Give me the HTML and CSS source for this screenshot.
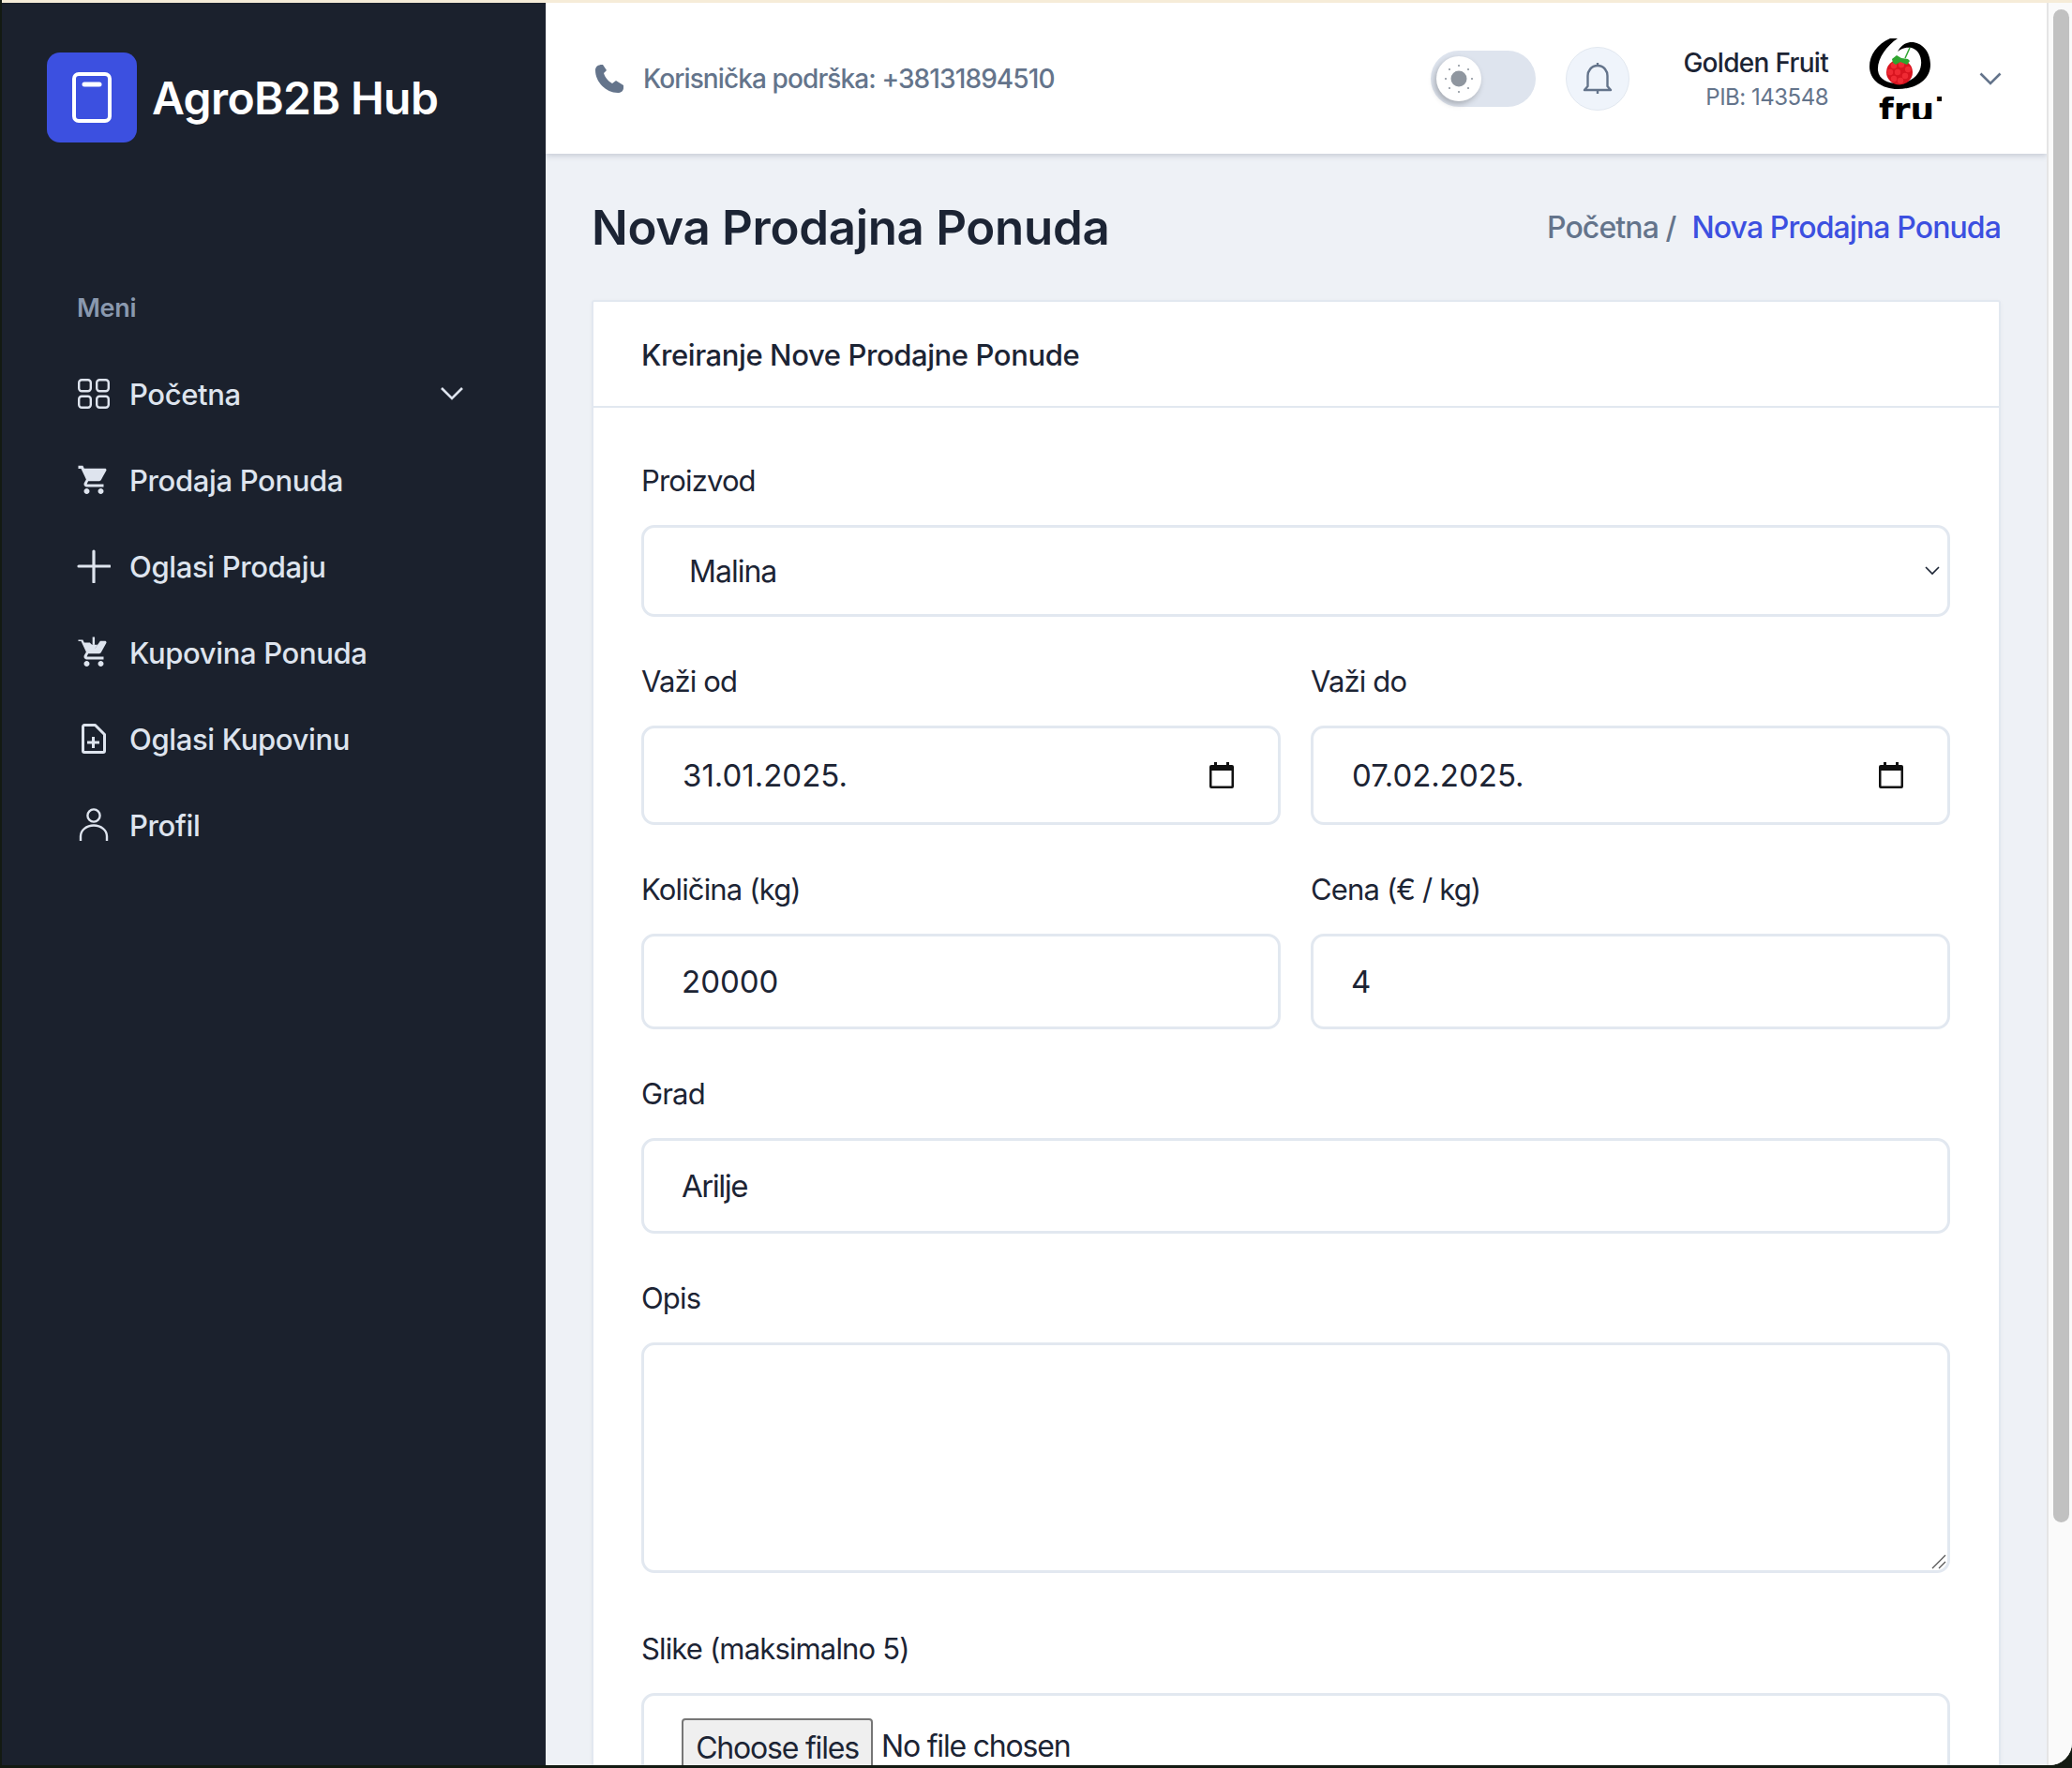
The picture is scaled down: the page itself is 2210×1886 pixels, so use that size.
FILE: index.html
```html
<!DOCTYPE html>
<html lang="sr">
<head>
<meta charset="utf-8">
<title>Nova Prodajna Ponuda</title>
<link rel="stylesheet" href="styles.css">
</head>
<body>
<div class="window">
  <aside class="sidebar">
    <div class="brand">
      <span class="brand-mark">
        <svg width="42" height="54" viewBox="0 0 42 54" fill="none" stroke="#fff" stroke-width="4"><rect x="2" y="2" width="38" height="50" rx="5"/><path d="M13 13h16" stroke-width="5" stroke-linecap="round"/></svg>
      </span>
      <span class="brand-name">AgroB2B Hub</span>
    </div>
    <div class="menu-title">Meni</div>
    <nav class="nav">
      <a class="nav-item">
        <span class="nav-icon"><svg width="34" height="32" viewBox="0 0 34 32" fill="none" stroke="currentColor" stroke-width="2.4"><rect x="1.2" y="1.2" width="12.6" height="12" rx="3"/><rect x="20.2" y="1.2" width="12.6" height="12" rx="3"/><rect x="1.2" y="18.8" width="12.6" height="12" rx="3"/><rect x="20.2" y="18.8" width="12.6" height="12" rx="3"/></svg></span>
        <span class="nav-label">Početna</span>
        <svg class="nav-chevron" width="26" height="16" viewBox="0 0 26 16" fill="none" stroke="currentColor" stroke-width="2.6"><path d="M2 2l11 11L24 2"/></svg>
      </a>
      <a class="nav-item">
        <span class="nav-icon"><svg width="36" height="36" viewBox="0 0 24 24" fill="currentColor"><path d="M7 18c-1.1 0-1.99.9-1.99 2S5.9 22 7 22s2-.9 2-2-.9-2-2-2zM1 2v2h2l3.6 7.59-1.35 2.45c-.16.28-.25.61-.25.96 0 1.1.9 2 2 2h12v-2H7.42c-.14 0-.25-.11-.25-.25l.03-.12.9-1.83h7.45c.75 0 1.41-.41 1.75-1.03l3.58-6.49c.08-.14.12-.31.12-.48 0-.55-.45-1-1-1H5.21l-.94-2H1zm16 16c-1.1 0-1.99.9-1.99 2s.89 2 1.99 2 2-.9 2-2-.9-2-2-2z"/></svg></span>
        <span class="nav-label">Prodaja Ponuda</span>
      </a>
      <a class="nav-item">
        <span class="nav-icon"><svg width="36" height="36" viewBox="0 0 36 36" fill="none" stroke="currentColor" stroke-width="3.2" stroke-linecap="round"><path d="M18 2v33M2 18h33"/></svg></span>
        <span class="nav-label">Oglasi Prodaju</span>
      </a>
      <a class="nav-item">
        <span class="nav-icon"><svg width="36" height="36" viewBox="0 0 24 24" fill="currentColor"><path d="M7 18c-1.1 0-1.99.9-1.99 2S5.9 22 7 22s2-.9 2-2-.9-2-2-2zM1 2v2h2l3.6 7.59-1.35 2.45c-.16.28-.25.61-.25.96 0 1.1.9 2 2 2h12v-2H7.42c-.14 0-.25-.11-.25-.25l.03-.12.9-1.83h7.45c.75 0 1.41-.41 1.75-1.03l3.58-6.49c.08-.14.12-.31.12-.48 0-.55-.45-1-1-1h-3.4L13 9 9.2 5H5.21l-.94-2H1zm16 16c-1.1 0-1.99.9-1.99 2s.89 2 1.99 2 2-.9 2-2-.9-2-2-2z"/><path d="M11.9 1v5.6" stroke="currentColor" stroke-width="1.6" fill="none"/><path d="M11.9 10.5L9 6.5h5.8z"/></svg></span>
        <span class="nav-label">Kupovina Ponuda</span>
      </a>
      <a class="nav-item">
        <span class="nav-icon"><svg width="26" height="32" viewBox="0 0 26 32" fill="none" stroke="currentColor" stroke-width="3" stroke-linejoin="round"><path d="M3 1.500h11.500L24.500 11.500V29a1.500 1.500 0 0 1-1.500 1.500H3A1.500 1.500 0 0 1 1.500 29V3A1.500 1.500 0 0 1 3 1.500z"/><path d="M6 20h13M12.500 14v12"/></svg></span>
        <span class="nav-label">Oglasi Kupovinu</span>
      </a>
      <a class="nav-item">
        <span class="nav-icon"><svg width="32" height="36" viewBox="0 0 32 36" fill="none" stroke="currentColor" stroke-width="2.4"><circle cx="16" cy="8" r="6.6"/><path d="M2 35V30a14 11.500 0 0 1 28 0v5"/></svg></span>
        <span class="nav-label">Profil</span>
      </a>
    </nav>
  </aside>

  <div class="content">
    <header class="topbar">
      <div class="support">
        <svg width="32" height="32" viewBox="0 0 32 32" fill="#64748b"><path d="M8 1C4 1 1 3 1 7c0 12 11 24 24 24 3 0 6-2 6-5v-3l-8-5-4 3c-4-2-8-7-9-11l3-3-4-6z"/></svg>
        <span>Korisnička podrška: +38131894510</span>
      </div>
      <div class="top-actions">
        <div class="toggle">
          <span class="knob">
            <svg width="32" height="32" viewBox="0 0 32 32" fill="#8f969f"><circle cx="16" cy="16" r="8.500"/><circle cx="16" cy="2" r="1.100"/><circle cx="16" cy="30" r="1.100"/><circle cx="2" cy="16" r="1.100"/><circle cx="30" cy="16" r="1.100"/><circle cx="6" cy="6" r="1.100"/><circle cx="26" cy="6" r="1.100"/><circle cx="6" cy="26" r="1.100"/><circle cx="26" cy="26" r="1.100"/></svg>
          </span>
        </div>
        <div class="bell">
          <svg width="32" height="36" viewBox="0 0 32 36" fill="none" stroke="#64748b" stroke-width="2.400" stroke-linejoin="round"><path d="M16 4C9 4 5.500 10 5.500 15v11L2 30h28l-3.500-4V15C26.500 10 23 4 16 4zM16 1v3M16 30v4"/></svg>
        </div>
        <div class="user">
          <div class="user-name">Golden Fruit</div>
          <div class="user-pib">PIB: 143548</div>
        </div>
        <svg class="logo" width="77" height="86" viewBox="0 0 77 86">
          <path d="M22 0C8 6 0 18 0 30c0 15 14 24 30 24 20 0 35-10 35-26C65 13 55 4 45 4c-6 0-11 3-15 10 5-4 10-5 15-4 7 2 11 10 10 18-1 12-13 20-25 20-10 0-20-4-21-14C8 22 18 8 30 0z" fill="#000"/>
          <path d="M43 10l-5 11" stroke="#2fa52f" stroke-width="1.500" fill="none"/>
          <ellipse cx="32" cy="36" rx="14" ry="13.500" fill="#d8141f"/>
          <g fill="#ef2a33"><circle cx="26" cy="29" r="3.200"/><circle cx="34" cy="28" r="3.200"/><circle cx="41" cy="33" r="3.200"/><circle cx="22" cy="36" r="3.200"/><circle cx="30" cy="36" r="3.200"/><circle cx="38" cy="40" r="3.200"/><circle cx="26" cy="43" r="3.200"/><circle cx="33" cy="45" r="3.200"/></g>
          <path d="M24 22l5-4 5 3 7 1 2 2-3 4-7-3-5 3-3-2z" fill="#2fa52f"/>
          <text class="logo-text" x="10" y="89">fruit</text>
          <rect x="69" y="68" width="8" height="18" fill="#fff"/>
        </svg>
        <svg class="user-chevron" width="24" height="14" viewBox="0 0 24 14" fill="none" stroke="#64748b" stroke-width="2.600"><path d="M1.500 1.500L12 12 22.500 1.500"/></svg>
      </div>
    </header>

    <main class="main">
      <div class="page-head">
        <h1 class="page-title">Nova Prodajna Ponuda</h1>
        <div class="crumbs"><span>Početna /</span><span class="crumb-current">Nova Prodajna Ponuda</span></div>
      </div>
      <section class="card">
        <h2 class="card-title">Kreiranje Nove Prodajne Ponude</h2>
        <form class="form">
          <div class="field">
            <label class="label">Proizvod</label>
            <div class="control select-box">Malina
              <svg class="select-arrow" width="16" height="10" viewBox="0 0 16 10" fill="none" stroke="#1c2434" stroke-width="1.600"><path d="M1 1l7 7 7-7"/></svg>
            </div>
          </div>
          <div class="row">
            <div class="field">
              <label class="label">Važi od</label>
              <div class="control date-box">31.01.2025.
                <svg class="calendar" width="26" height="28" viewBox="0 0 26 28"><path d="M5 0h3v3h10V0h3v3h3a2 2 0 0 1 2 2v21a2 2 0 0 1-2 2H2a2 2 0 0 1-2-2V5a2 2 0 0 1 2-2h3zM2.500 9v16.500h21V9z" fill="#111"/></svg>
              </div>
            </div>
            <div class="field">
              <label class="label">Važi do</label>
              <div class="control date-box">07.02.2025.
                <svg class="calendar" width="26" height="28" viewBox="0 0 26 28"><path d="M5 0h3v3h10V0h3v3h3a2 2 0 0 1 2 2v21a2 2 0 0 1-2 2H2a2 2 0 0 1-2-2V5a2 2 0 0 1 2-2h3zM2.500 9v16.500h21V9z" fill="#111"/></svg>
              </div>
            </div>
          </div>
          <div class="row">
            <div class="field">
              <label class="label">Količina (kg)</label>
              <div class="control text-box">20000</div>
            </div>
            <div class="field">
              <label class="label">Cena (€ / kg)</label>
              <div class="control text-box">4</div>
            </div>
          </div>
          <div class="field">
            <label class="label">Grad</label>
            <div class="control text-box city-box">Arilje</div>
          </div>
          <div class="field field-opis">
            <label class="label">Opis</label>
            <div class="control area-box">
              <svg class="grip" width="16" height="16" viewBox="0 0 16 16" fill="none" stroke="#555" stroke-width="1.300"><path d="M1 15L15 1M8 15l7-7"/></svg>
            </div>
          </div>
          <div class="field">
            <label class="label">Slike (maksimalno 5)</label>
            <div class="control file-box"><button type="button" class="file-btn">Choose files</button><span>No file chosen</span></div>
          </div>
        </form>
      </section>
    </main>
  </div>

  <div class="scrollbar"><span class="thumb"></span></div>
</div>
</body>
</html>
```
FILE: styles.css
```css
* { box-sizing: border-box; }
html, body { margin: 0; height: 100%; overflow: hidden; }
body {
  background: #131a12;
  font-family: Inter, "Noto Sans", sans-serif;
  color: #1c2434;
}
.window {
  width: 2208px;
  height: 1883px;
  margin-left: 2px;
  display: flex;
  overflow: hidden;
  border-top: 3px solid #f6ecd8;
  border-bottom-right-radius: 24px;
  background: #fff;
}
.sidebar {
  width: 580px;
  flex: none;
  background: #1b212d;
  color: #dee4ee;
  padding: 53px 0 0 48px;
}
.brand { display: flex; align-items: center; gap: 16px; }
.brand-mark {
  width: 96px;
  height: 96px;
  border-radius: 14px;
  background: #3c50e0;
  display: flex;
  align-items: center;
  justify-content: center;
  color: #fff;
}
.brand-name { font-size: 48px; font-weight: 600; color: #fff; letter-spacing: -0.6px; }
.menu-title {
  margin: 157px 0 0 32px;
  font-size: 27px;
  line-height: 40px;
  font-weight: 600;
  color: #8a99af;
  letter-spacing: -0.3px;
}
.nav { margin: 25px 0 0 32px; display: flex; flex-direction: column; }
.nav-item { height: 92px; display: flex; align-items: center; position: relative; }
.nav-icon {
  width: 36px;
  height: 40px;
  margin-right: 20px;
  flex: none;
  display: flex;
  align-items: center;
  justify-content: center;
}
.nav-label { font-size: 31px; font-weight: 500; letter-spacing: -0.35px; }
.nav-chevron { margin-left: auto; margin-right: 87px; }

.content { flex: 1; min-width: 0; display: flex; flex-direction: column; overflow: hidden; background: #eef1f6; }
.topbar {
  height: 161px;
  flex: none;
  background: #fff;
  box-shadow: 0 2px 6px rgba(120, 130, 150, .35);
  position: relative;
  display: flex;
  align-items: center;
  justify-content: space-between;
  padding: 0 48px 0 52px;
}
.support { display: flex; align-items: center; gap: 20px; font-size: 28px; font-weight: 500; letter-spacing: -0.9px; color: #64748b; }
.top-actions { display: flex; align-items: center; }
.toggle { width: 112px; height: 60px; border-radius: 30px; background: #dee4ee; display: flex; align-items: center; padding-left: 6px; }
.knob {
  width: 48px;
  height: 48px;
  border-radius: 50%;
  background: #fff;
  box-shadow: -2px 3px 6px rgba(0, 0, 0, .25);
  display: flex;
  align-items: center;
  justify-content: center;
}
.bell {
  width: 68px;
  height: 68px;
  margin-left: 32px;
  border-radius: 50%;
  background: #eff4fb;
  border: 1px solid #e2e8f0;
  display: flex;
  align-items: center;
  justify-content: center;
}
.user { width: 212px; text-align: right; margin-top: 3px; }
.user-name { font-size: 28px; line-height: 38px; font-weight: 500; color: #1c2434; letter-spacing: -0.7px; }
.user-pib { font-size: 24px; line-height: 36px; color: #64748b; letter-spacing: -0.5px; }
.logo { margin-left: 44px; flex: none; overflow: hidden; }
.logo-text { font-family: "DejaVu Sans", sans-serif; font-weight: 700; font-size: 36px; }
.user-chevron { margin-left: 40px; flex: none; }

.main { flex: 1; padding: 0 49px; }
.page-head { height: 156px; display: flex; align-items: center; justify-content: space-between; }
.page-title { margin: 0; font-size: 51px; font-weight: 600; color: #1c2434; letter-spacing: -0.3px; }
.crumbs { display: flex; gap: 17px; font-size: 32px; font-weight: 500; letter-spacing: -0.9px; color: #64748b; margin-top: 1px; }
.crumb-current { color: #3c50e0; }
.card { background: #fff; border: 2px solid #e2e8f0; border-radius: 3px; box-shadow: 0 1px 4px rgba(0,0,0,.04); }
.card-title {
  margin: 0;
  height: 113px;
  line-height: 114px;
  padding-left: 51px;
  border-bottom: 2px solid #e2e8f0;
  font-size: 31px;
  font-weight: 500;
  letter-spacing: -0.4px;
  color: #1c2434;
}
.form { padding: 55px 52px 0 51px; display: flex; flex-direction: column; gap: 46px; }
.row { display: grid; grid-template-columns: 1fr 1fr; gap: 32px; }
.label { display: block; height: 46px; line-height: 46px; margin-bottom: 24px; font-size: 31px; font-weight: 400; letter-spacing: -0.85px; color: #1c2434; }
.control { position: relative; border: 3px solid #e2e8f0; border-radius: 14px; background: #fff; font-size: 33px; color: #1c2434; display: flex; align-items: center; }
.select-box { height: 98px; padding: 1px 0 0 48px; font-size: 32px; letter-spacing: -1px; }
.date-box { height: 106px; padding-left: 41px; }
.text-box { height: 102px; padding-left: 40px; }
.city-box { letter-spacing: -1.5px; }
.field-opis { margin-bottom: 12px; }
.area-box { height: 246px; }
.file-box { height: 140px; padding: 24px 0 0 40px; align-items: flex-start; font-size: 32px; letter-spacing: -1.2px; gap: 9px; line-height: 60px; }
.file-btn {
  width: 204px;
  height: 60px;
  padding: 0;
  flex: none;
  background: #efefef;
  border: 2px solid #767676;
  border-radius: 4px;
  font: inherit;
  letter-spacing: inherit;
  color: #1c2434;
}
.select-arrow { position: absolute; right: 8px; top: 41px; }
.calendar { position: absolute; right: 47px; top: 36px; }
.grip { position: absolute; right: 1px; bottom: 1px; }
.scrollbar { width: 27px; flex: none; background: #fafafa; border-left: 2px solid #e5e5e5; padding: 7px 3px 0 5px; }
.thumb { display: block; height: 1614px; border-radius: 9px; background: #c1c1c1; }
```
